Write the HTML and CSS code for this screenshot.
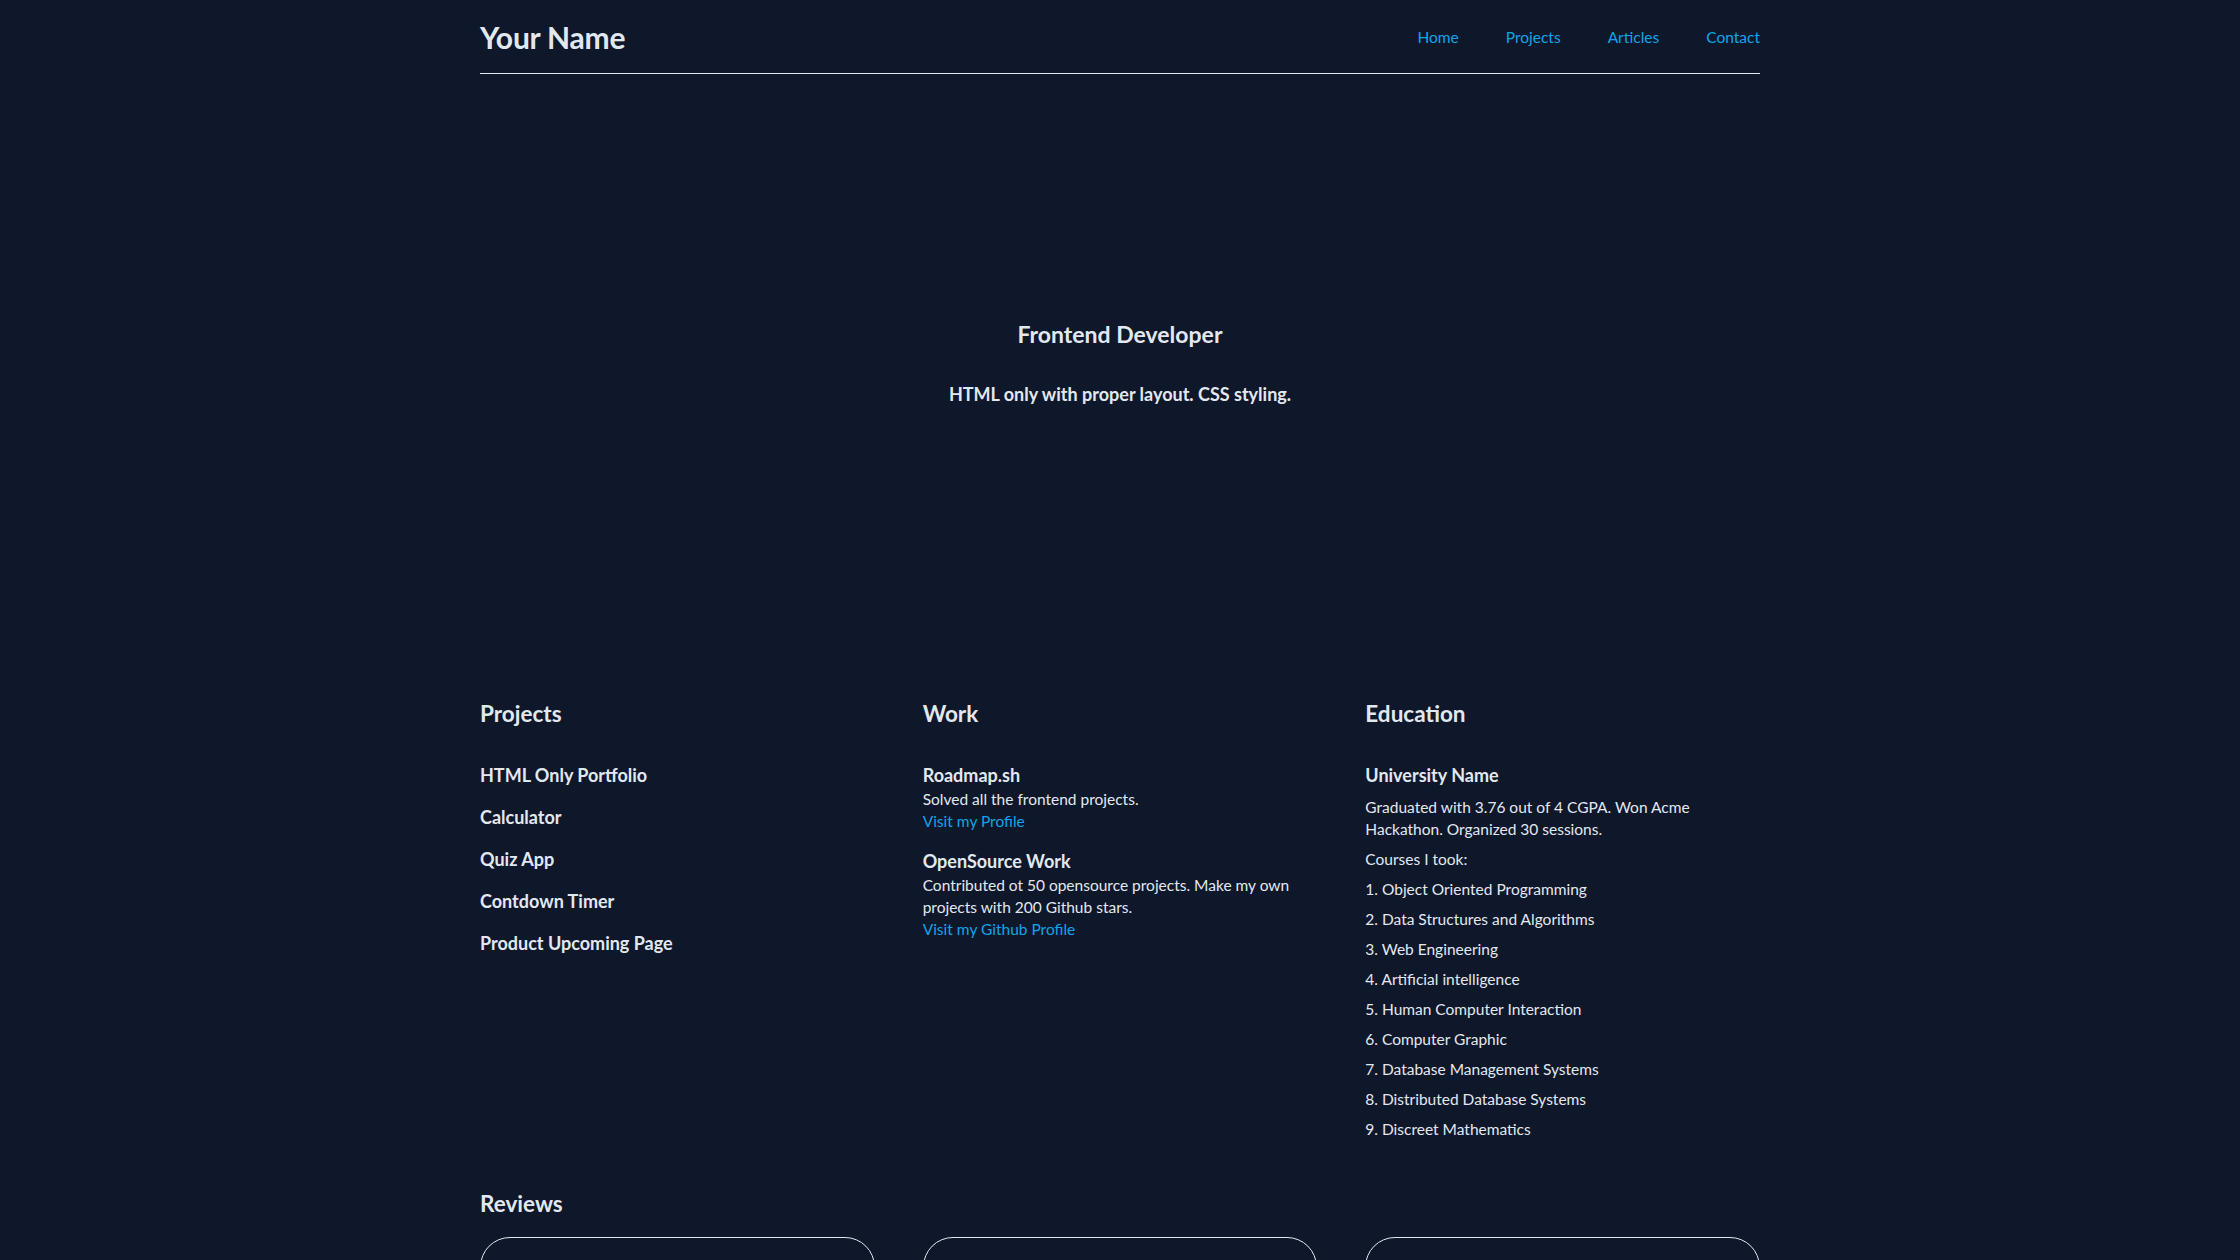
FILE: index.html
```html
<!DOCTYPE html>
<html lang="en">
<head>
<meta charset="utf-8">
<title>Your Name</title>
<link rel="stylesheet" href="styles.css">
</head>
<body>
<div class="page">
  <header class="site-header">
    <a class="brand" href="#">Your Name</a>
    <nav class="nav">
      <a href="#">Home</a>
      <a href="#">Projects</a>
      <a href="#">Articles</a>
      <a href="#">Contact</a>
    </nav>
  </header>

  <section class="hero">
    <h2 class="hero-title">Frontend Developer</h2>
    <p class="hero-tagline">HTML only with proper layout. CSS styling.</p>
  </section>

  <div class="columns">
    <section class="col">
      <h2 class="section-title">Projects</h2>
      <ul class="project-list">
        <li>HTML Only Portfolio</li>
        <li>Calculator</li>
        <li>Quiz App</li>
        <li>Contdown Timer</li>
        <li>Product Upcoming Page</li>
      </ul>
    </section>

    <section class="col">
      <h2 class="section-title">Work</h2>
      <div class="work-item">
        <h3 class="item-title">Roadmap.sh</h3>
        <p class="text">Solved all the frontend projects.</p>
        <a class="link" href="#">Visit my Profile</a>
      </div>
      <div class="work-item">
        <h3 class="item-title">OpenSource Work</h3>
        <p class="text">Contributed ot 50 opensource projects. Make my own projects with 200 Github stars.</p>
        <a class="link" href="#">Visit my Github Profile</a>
      </div>
    </section>

    <section class="col">
      <h2 class="section-title">Education</h2>
      <h3 class="item-title edu-title">University Name</h3>
      <p class="edu-text">Graduated with 3.76 out of 4 CGPA. Won Acme Hackathon. Organized 30 sessions.</p>
      <p class="edu-text">Courses I took:</p>
      <p class="edu-text">1. Object Oriented Programming</p>
      <p class="edu-text">2. Data Structures and Algorithms</p>
      <p class="edu-text">3. Web Engineering</p>
      <p class="edu-text">4. Artificial intelligence</p>
      <p class="edu-text">5. Human Computer Interaction</p>
      <p class="edu-text">6. Computer Graphic</p>
      <p class="edu-text">7. Database Management Systems</p>
      <p class="edu-text">8. Distributed Database Systems</p>
      <p class="edu-text">9. Discreet Mathematics</p>
    </section>
  </div>

  <section class="reviews">
    <h2 class="section-title">Reviews</h2>
    <div class="review-grid">
      <article class="review-card">
        <p class="review-quote">"Great developer to work with. Delivered the project on time."</p>
        <p class="review-author">John Doe</p>
      </article>
      <article class="review-card">
        <p class="review-quote">"Clean, semantic HTML and a very well structured layout."</p>
        <p class="review-author">Jane Smith</p>
      </article>
      <article class="review-card">
        <p class="review-quote">"Highly recommended for any frontend work."</p>
        <p class="review-author">Alex Brown</p>
      </article>
    </div>
  </section>
</div>
</body>
</html>
```

FILE: styles.css
```css
html, body {
  margin: 0;
  padding: 0;
  background: #0f172a;
}

body {
  color: #e2e8f0;
  font-family: Lato, "Noto Sans", sans-serif;
  font-size: 15.5px;
}

.page {
  width: 1280px;
  margin: 0 auto;
}

a {
  color: #0ea5e9;
  text-decoration: none;
}

.site-header {
  height: 73px;
  display: flex;
  align-items: center;
  justify-content: space-between;
  border-bottom: 1px solid #e2e8f0;
}

.brand {
  color: #e2e8f0;
  font-size: 30px;
  font-weight: 700;
  line-height: 36px;
  letter-spacing: -0.2px;
}

.nav {
  display: flex;
  gap: 47px;
  padding-top: 1px;
}

.nav a {
  font-size: 15.5px;
  line-height: 20px;
}

.hero {
  height: 576px;
  display: flex;
  flex-direction: column;
  align-items: center;
  justify-content: center;
}

.hero-title {
  margin: 0;
  font-size: 23px;
  line-height: 30px;
  font-weight: 700;
}

.hero-tagline {
  margin: 33px 0 0;
  font-size: 18px;
  line-height: 24px;
  font-weight: 700;
}

.columns {
  margin-top: 49px;
  display: grid;
  grid-template-columns: repeat(3, 1fr);
  gap: 48px;
  align-items: start;
}

.section-title {
  margin: 0;
  font-size: 22.5px;
  line-height: 30px;
  font-weight: 700;
}

.project-list {
  list-style: none;
  margin: 34px 0 0;
  padding: 0;
  display: flex;
  flex-direction: column;
  gap: 18px;
}

.project-list li {
  font-size: 18px;
  line-height: 24px;
  font-weight: 700;
}

.work-item {
  margin-top: 34px;
}

.work-item + .work-item {
  margin-top: 17px;
}

.item-title {
  margin: 0 0 1px;
  font-size: 18px;
  line-height: 24px;
  font-weight: 700;
}

.text {
  margin: 0;
  line-height: 22px;
}

.link {
  display: block;
  line-height: 22px;
}

.edu-title {
  margin: 34px 0 9px;
}

.edu-text {
  margin: 0 0 8px;
  line-height: 22px;
}

.reviews {
  margin-top: 41px;
}

.review-grid {
  margin-top: 18px;
  display: grid;
  grid-template-columns: repeat(3, 1fr);
  gap: 48px;
}

.review-card {
  border: 1px solid #e2e8f0;
  border-radius: 30px;
  padding: 28px 24px;
  min-height: 180px;
}

.review-quote {
  margin: 0 0 12px;
  line-height: 22px;
}

.review-author {
  margin: 0;
  font-weight: 700;
}
```
